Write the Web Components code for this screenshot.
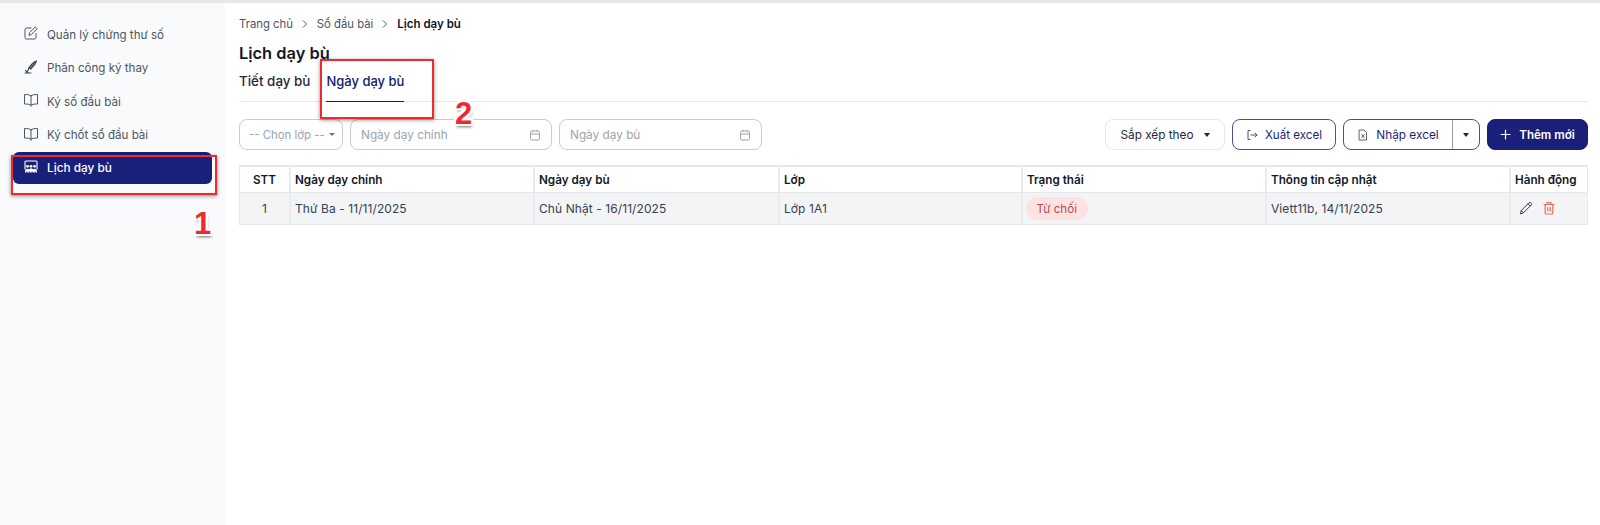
<!DOCTYPE html>
<html lang="vi"><head><meta charset="utf-8"><title>Lịch dạy bù</title>
<style>
html,body{margin:0;height:525px;overflow:hidden;background:#fff;font-family:Inter,"Noto Sans",sans-serif;color:#111827}
</style></head><body>
<app-shell>
  <side-nav slot="side">
    <nav-item icon="edit">Quản lý chứng thư số</nav-item>
    <nav-item icon="sign">Phân công ký thay</nav-item>
    <nav-item icon="book">Ký số đầu bài</nav-item>
    <nav-item icon="book">Ký chốt sổ đầu bài</nav-item>
    <nav-item icon="class" active>Lịch dạy bù</nav-item>
  </side-nav>
  <page-head></page-head>
  <tool-bar></tool-bar>
  <data-table></data-table>
  <note-box style="left:11px;top:152px;width:206px;height:40px" num="1" dx="181" dy="50"></note-box>
  <note-box style="left:320px;top:56px;width:114px;height:60px" num="2" dx="133" dy="36"></note-box>
</app-shell>
<script>
const ICONS={
edit:'<svg width="16" height="16" viewBox="0 0 16 16" fill="none" stroke="#4b5563" stroke-width="1" stroke-linecap="round" stroke-linejoin="round"><path d="M13 8.500V12.500a1.500 1.500 0 0 1-1.500 1.500h-8A1.500 1.500 0 0 1 2 12.500v-8A1.500 1.500 0 0 1 3.500 3H8"/><path d="M6 10l.5-2.400L12.300 1.900l1.800 1.800L8.400 9.500z"/></svg>',
sign:'<svg width="16" height="16" viewBox="0 0 16 16" fill="none" stroke="#374151" stroke-width="1.100" stroke-linecap="round" stroke-linejoin="round"><path d="M13.500 2C10.800 3 7.800 5.600 6 8.800l1.700 1.300C10 8 12.500 5 13.500 2z" fill="#6b7280"/><path d="M6 8.800L4.800 12M2 14h6M2.500 11.500l2.300 2"/></svg>',
book:'<svg width="16" height="16" viewBox="0 0 16 16" fill="none" stroke="#4b5563" stroke-width="1" stroke-linejoin="round" stroke-linecap="round"><path d="M8 3.800C6.800 2.900 5 2.500 1.500 2.500v9.500c3.500 0 5.300.4 6.500 1.300 1.200-.9 3-1.300 6.500-1.300V2.500C11 2.500 9.200 2.900 8 3.800zM8 3.800v10.500"/></svg>',
class:'<svg width="16" height="16" viewBox="-1 0 16 16" fill="none" stroke="#fff" stroke-width="1.100" stroke-linecap="round"><path d="M1 10V3a1 1 0 0 1 1-1h10a1 1 0 0 1 1 1v7"/><g fill="#fff" stroke="none"><circle cx="3.500" cy="7.300" r="1.400"/><circle cx="7" cy="7.300" r="1.400"/><circle cx="10.500" cy="7.300" r="1.400"/><path d="M1 13.500v-1.500a2.400 2.400 0 0 1 4-1.700 2.800 2.800 0 0 1 4 0 2.400 2.400 0 0 1 4 1.700v1.500h-1.500v-1h-.8v1H8.600v-1h-.8v1H6.200v-1h-.8v1H3.300v-1h-.8v1z"/></g></svg>',
cal:'<svg width="12" height="12" viewBox="0 0 12 12" fill="none" stroke="#9ca3af" stroke-width="1"><rect x="1.500" y="2" width="9" height="9" rx="1.500"/><path d="M1.500 5h9M4 .8v2M8 .8v2"/></svg>',
exp:'<svg width="12" height="12" viewBox="0 0 12 12" fill="none" stroke="#4b5563" stroke-width="1" stroke-linecap="round" stroke-linejoin="round"><path d="M4 1.500H2v9h2M5 6h6M9 4l2 2-2 2"/></svg>',
file:'<svg width="12" height="12" viewBox="0 0 12 12" fill="none" stroke="#4b5563" stroke-width=".9" stroke-linejoin="round" stroke-linecap="round"><path d="M2.500 1h4.500l2.500 2.500V11h-7z"/><path d="M4.800 5.500l2.400 3M7.200 5.500l-2.400 3"/></svg>',
plus:'<svg width="11" height="11" viewBox="0 0 11 11" stroke="#fff" stroke-width="1.200" stroke-linecap="round"><path d="M5.500 1v9M1 5.500h9"/></svg>',
pen:'<svg width="14" height="14" viewBox="0 0 14 14" fill="none" stroke="#374151" stroke-width="1" stroke-linejoin="round" stroke-linecap="round"><path d="M1.500 12.500l.8-3L10 1.800a1.200 1.200 0 0 1 1.700 0l.5.500a1.200 1.200 0 0 1 0 1.700L4.500 11.700zM2.300 9.500l2.200 2.200M9 2.800L11.200 5"/></svg>',
trash:'<svg width="14" height="14" viewBox="0 0 14 14" fill="none" stroke="#ea6a5a" stroke-width="1.200" stroke-linejoin="round" stroke-linecap="round"><path d="M2 3.500h10M5 3.500V1.500h4v2M3.200 3.500v8.500a1 1 0 0 0 1 1h5.600a1 1 0 0 0 1-1V3.500M5.800 6.500v3.500M8.200 6.500v3.500"/></svg>'
};
function def(name,css,html){
  customElements.define(name,class extends HTMLElement{
    constructor(){super();this.attachShadow({mode:'open'});}
    connectedCallback(){
      const h=typeof html==='function'?html(this):html;
      this.shadowRoot.innerHTML='<style>'+css+'</style>'+h;
    }
  });
}
def('app-shell',`
:host{display:grid;grid-template-columns:225px 1fr;width:1600px;height:525px;position:relative;box-sizing:border-box;border-top:3px solid #e7e7e9}
.side{display:block}
.main{padding:0 12px 0 14px;min-width:0;box-sizing:border-box}
`,`<div class="side"><slot name="side"></slot></div><div class="main"><slot></slot></div>`);
def('side-nav',`
:host{display:flex;flex-direction:column;height:522px;background:#f9fafb;padding:14.400px 13px 0 13px;box-sizing:border-box}
`,`<slot></slot>`);
def('nav-item',`
:host{display:flex;align-items:center;gap:8px;height:33.500px;padding:0 10px;width:199px;box-sizing:border-box;font-size:11.600px;color:#4b5563;flex:none;border-radius:6px}
:host([active]){background:#1a1f7a;color:#fff;font-weight:500;height:32px;margin-top:.6px;font-size:11.800px}
.i{display:flex;width:16px;height:16px;margin-top:-2px}
span:last-child{position:relative;top:.5px}
`,e=>`<span class="i">${ICONS[e.getAttribute('icon')]}</span><span><slot></slot></span>`);
def('page-head',`
:host{display:block}
.crumb{display:flex;align-items:center;height:15px;margin-top:13px;font-size:11.300px;color:#4b5563;gap:7px}
.crumb b{color:#111827;font-weight:600;font-size:11.500px}
.crumb svg{display:block}
h1{font-size:16.400px;font-weight:600;line-height:20px;margin:12px 0 0;color:#111827}
.tabs{display:flex;gap:16px;margin-top:0;border-bottom:1px solid #e5e7eb;font-weight:500;box-sizing:border-box;height:39px}
.tab{padding-top:9px;height:38px;box-sizing:border-box;line-height:19px;color:#1f2937;font-size:13.400px}
.tab.on{color:#141a70;border-bottom:1px solid #141a70;height:39px;font-size:13px}
`,()=>{const ch='<svg width="10" height="10" viewBox="0 0 10 10" fill="none" stroke="#4b5563" stroke-width="1"><path d="M3 1.500L6.500 5 3 8.500"/></svg>';
return `<div class="crumb"><span>Trang chủ</span>${ch}<span>Sổ đầu bài</span>${ch}<b>Lịch dạy bù</b></div>
<h1>Lịch dạy bù</h1>
<div class="tabs"><div class="tab">Tiết dạy bù</div><div class="tab on">Ngày dạy bù</div></div>`});
def('tool-bar',`
:host{display:flex;align-items:center;margin-top:17px;height:31px;font-size:11.800px}
.f{box-sizing:border-box;height:31px;border:1px solid #c8cbd0;border-radius:8px;display:flex;align-items:center;color:#9ca3af;padding:0 10px;justify-content:space-between;flex:none}
.sel{width:104px;padding:0 7px 0 9px;margin-right:7px;font-size:11.400px}
.date{width:202px;margin-right:7px}
.date+.date{width:203px;margin-right:0}
.sp{flex:1}
.b{box-sizing:border-box;height:31px;border-radius:8px;display:flex;align-items:center;justify-content:center;border:1px solid #4a4f8f;color:#1a1f7a;gap:7px;background:#fff;flex:none}
.sort{width:120px;border-color:#e5e7eb;color:#1f2937;gap:10px;margin-right:7px;font-size:11.800px}
.exp{width:104px;margin-right:7px;font-size:11.600px}
.group{display:flex;width:137px;height:31px;box-sizing:border-box;border:1px solid #4a4f8f;border-radius:8px;margin-right:7px;flex:none}
.group span.l{width:109px;box-sizing:border-box;display:flex;align-items:center;justify-content:center;gap:7px;color:#1a1f7a;border-right:1px solid #9a9db8}
.group span.r{flex:1;display:flex;align-items:center;justify-content:center}
.add{width:101px;background:#1a1f7a;border-color:#1a1f7a;color:#fff;font-weight:600;gap:8px;font-size:11.600px}
.tri{width:0;height:0;border-left:3.500px solid transparent;border-right:3.500px solid transparent;border-top:4px solid #1f2937}
.sel .tri{border-top-color:#6b7280;border-left-width:3px;border-right-width:3px;border-top-width:3.500px}
`,`<div class="f sel"><span>-- Chọn lớp --</span><i class="tri"></i></div>
<div class="f date"><span>Ngày dạy chính</span>${ICONS.cal}</div>
<div class="f date"><span>Ngày dạy bù</span>${ICONS.cal}</div>
<div class="sp"></div>
<div class="b sort"><span>Sắp xếp theo</span><i class="tri"></i></div>
<div class="b exp">${ICONS.exp}<span>Xuất excel</span></div>
<div class="group"><span class="l">${ICONS.file}<span>Nhập excel</span></span><span class="r"><i class="tri"></i></span></div>
<div class="b add">${ICONS.plus}<span>Thêm mới</span></div>`);
def('data-table',`
:host{display:block;margin-top:15px;font-size:12px;width:1349px}
.t{display:grid;grid-template-columns:49px 244px 245px 243px 244px 244px 1fr;border:1px solid #e5e7eb;border-top:2px solid #e5e7eb;border-bottom:1px solid #e5e7eb;box-sizing:border-box}
.c{display:flex;align-items:center;padding:0 4px;border-left:2px solid #e9ebee;box-sizing:border-box;min-width:0;white-space:nowrap}
.c.s{border-left:0}
.h{height:26px;font-weight:600;color:#111827;border-bottom:1px solid #e5e7eb;font-size:11.700px}
.d{height:31px;background:#f3f4f6;color:#374151;letter-spacing:.08px}
.ctr{justify-content:center}
.pill{background:#fee2e2;color:#b94a55;border-radius:12px;height:23px;padding:0 10.500px;display:flex;align-items:center;margin-left:-1px;font-size:11.500px}
.act{gap:9px;padding-left:8px}
.act svg{display:block;margin-top:-2px}
`,()=>{const hs=['STT','Ngày dạy chính','Ngày dạy bù','Lớp','Trạng thái','Thông tin cập nhật','Hành động'];
return `<div class="t">${hs.map((x,i)=>`<div class="c h${i?'':' ctr s'}">${x}</div>`).join('')}
<div class="c d ctr s">1</div><div class="c d">Thứ Ba - 11/11/2025</div><div class="c d">Chủ Nhật - 16/11/2025</div><div class="c d">Lớp 1A1</div>
<div class="c d"><span class="pill">Từ chối</span></div><div class="c d">Viett11b, 14/11/2025</div><div class="c d act">${ICONS.pen}${ICONS.trash}</div></div>`});
def('note-box',`
:host{position:absolute;display:block;box-sizing:border-box;border:2px solid #ee2a2f;box-shadow:0 1px 4px rgba(0,0,0,.45)}
.n{position:absolute;font:700 31px/34px "Liberation Sans",Arial,sans-serif;color:#ee2a2f;text-shadow:-2px -2px 0 #fff,2px -2px 0 #fff,-2px 2px 0 #fff,2px 2px 0 #fff,-2px 0 0 #fff,2px 0 0 #fff,0 2px 0 #fff,0 -2px 0 #fff,1px 3px 3px rgba(0,0,0,.55)}
`,e=>`<span class="n" style="left:${e.getAttribute('dx')}px;top:${e.getAttribute('dy')}px">${e.getAttribute('num')}</span>`);
</script>
</body></html>
